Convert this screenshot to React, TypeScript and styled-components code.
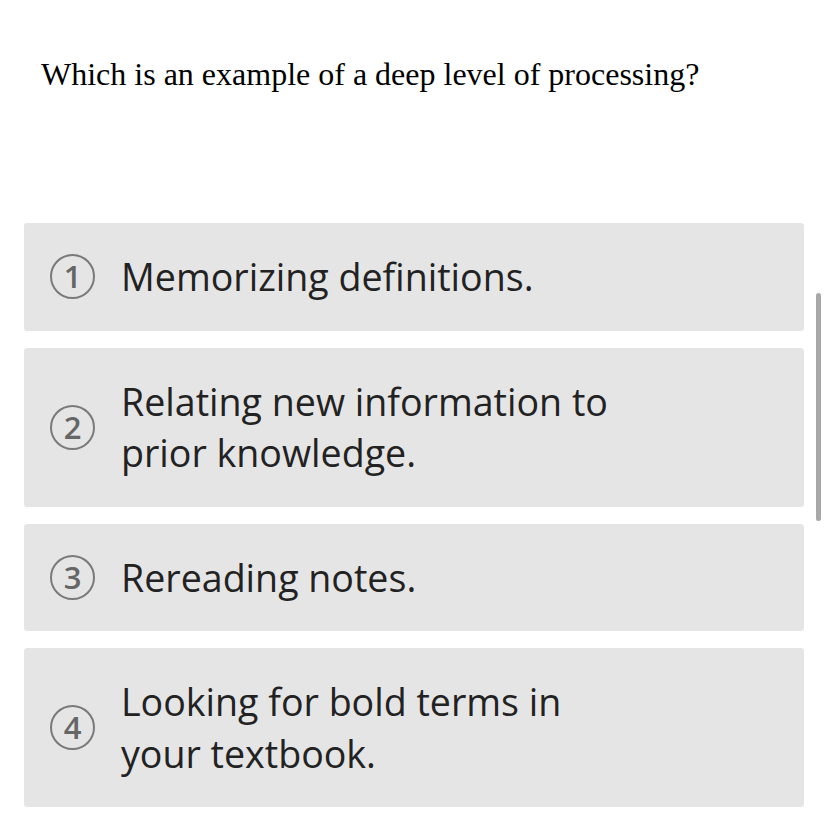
import React from "react";
import styled, { createGlobalStyle } from "styled-components";

const Global = createGlobalStyle`
  html, body { margin: 0; padding: 0; background: #ffffff; }
  body { width: 828px; height: 828px; overflow: hidden; }
`;

const Page = styled.div`
  position: relative;
  width: 828px;
  height: 828px;
  box-sizing: border-box;
  padding: 0 24px 0 24px;
  display: flex;
  flex-direction: column;
`;

const Question = styled.h1`
  margin: 55px 0 0 17px;
  font-family: "Liberation Serif", "Times New Roman", serif;
  font-weight: 400;
  font-size: 32px;
  line-height: 38px;
  color: #000;
`;

const Options = styled.div`
  margin-top: 130px;
  display: flex;
  flex-direction: column;
  gap: 17px;
`;

const Option = styled.div`
  display: flex;
  align-items: center;
  gap: 26px;
  padding: 28px 24px 28px 26px;
  background: #e5e5e5;
  border-radius: 3px;
`;

const Badge = styled.div`
  flex: 0 0 auto;
  width: 41px;
  height: 41px;
  border: 2px solid #7a7a7a;
  border-radius: 50%;
  display: flex;
  align-items: center;
  justify-content: center;
  font-family: "Open Sans", sans-serif;
  font-weight: 600;
  font-size: 31px;
  color: #666;
  line-height: 1;
`;

const Label = styled.div`
  max-width: 520px;
  font-family: "Open Sans", sans-serif;
  font-size: 37.6px;
  line-height: 51.5px;
  color: #222;
`;

const Scrollbar = styled.div`
  position: absolute;
  right: 7px;
  top: 293px;
  width: 5px;
  height: 228px;
  border-radius: 3px;
  background: #a8a8a8;
`;

const options = [
  "Memorizing definitions.",
  "Relating new information to prior knowledge.",
  "Rereading notes.",
  "Looking for bold terms in your textbook.",
];

export default function App() {
  return (
    <>
      <Global />
      <Page>
        <Question>Which is an example of a deep level of processing?</Question>
        <Options>
          {options.map((t, i) => (
            <Option key={i}>
              <Badge>{i + 1}</Badge>
              <Label>{t}</Label>
            </Option>
          ))}
        </Options>
        <Scrollbar />
      </Page>
    </>
  );
}
